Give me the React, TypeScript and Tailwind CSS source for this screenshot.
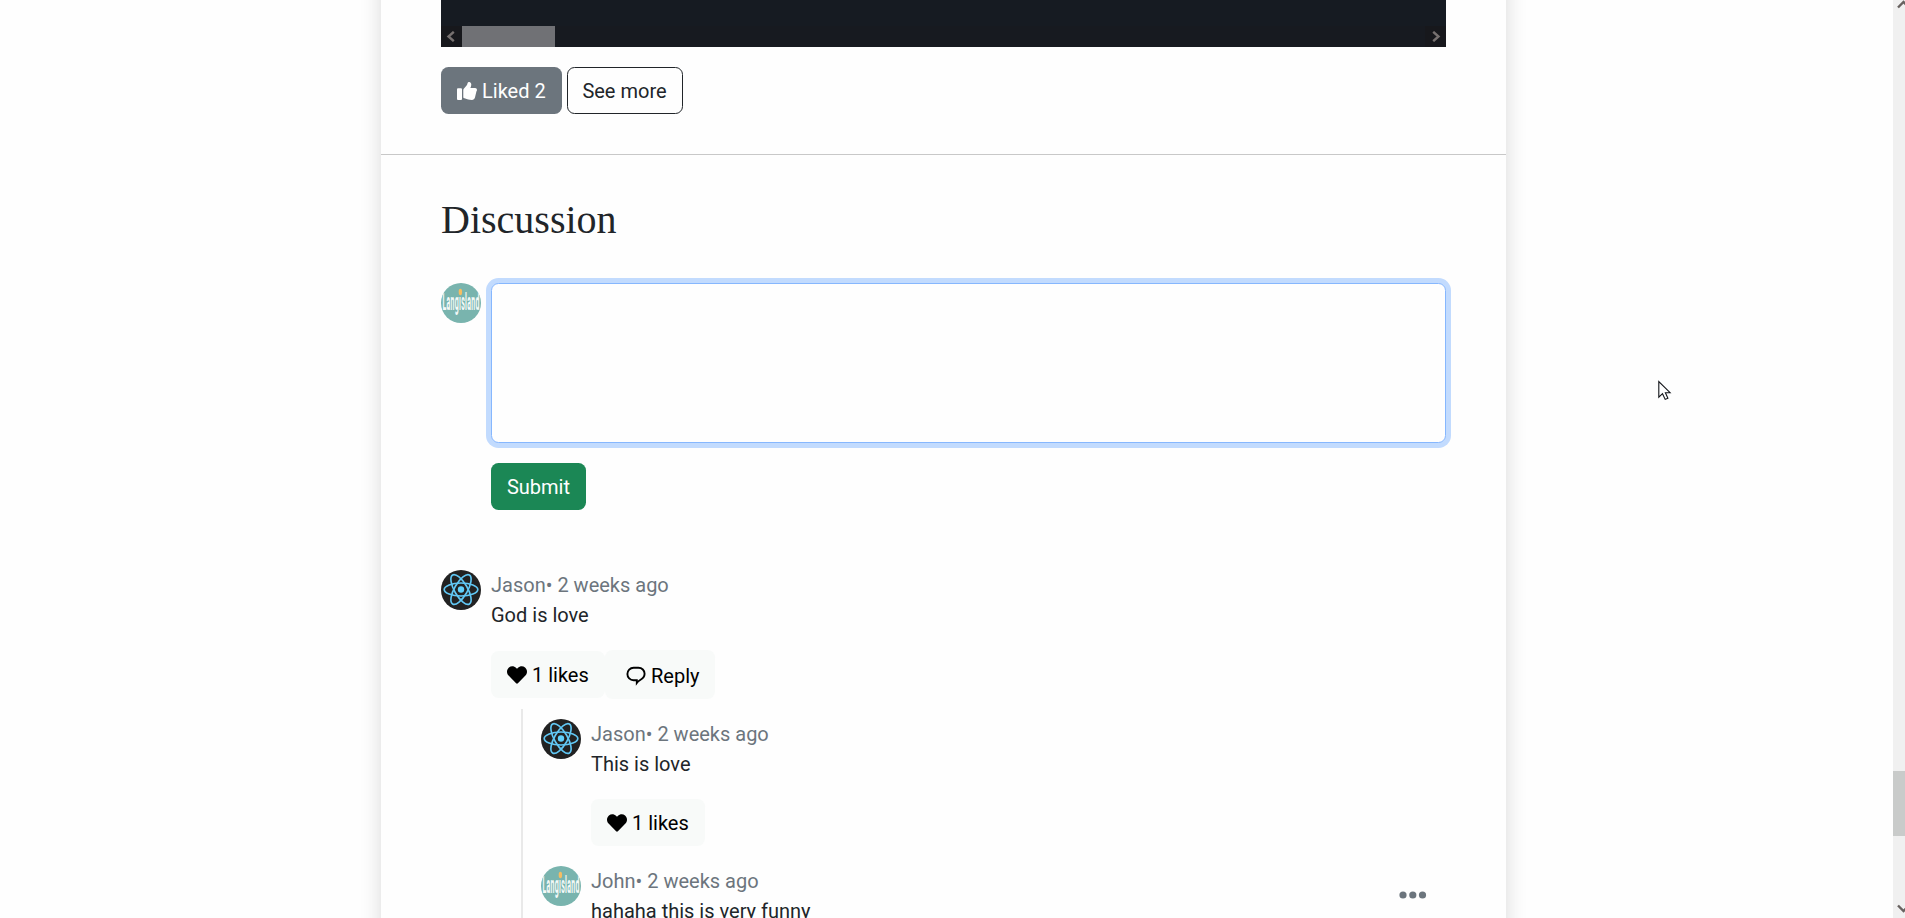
import type { ReactNode } from "react";
import { FaHeart } from "react-icons/fa";

function ThumbIcon() {
  return (
    <svg width="20" height="18" viewBox="0 0 20 18" fill="currentColor" className="shrink-0">
      <rect x="0" y="6.3" width="5" height="11.7" rx="1" />
      <path d="M6.300 8.200c0-.7.2-1.200.7-1.700l2.400-2.700c.8-.9.9-1.900 1.200-2.800C10.900.2 11.500 0 12.200.1c1.300.2 2.200 1.300 2.100 2.700-.1 1.300-.5 2.200-.9 3.200h4.700c1.100 0 1.900.9 1.900 1.900 0 .5-.3 1.100-.6 1.600l-1.300 5.600c-.4 1.900-1.300 2.800-3.300 2.800-2.800 0-4.600-.4-6.600-1.300-1.100-.5-1.900-.7-1.900-1.400Z" />
    </svg>
  );
}

function ReplyIcon() {
  return (
    <svg width="20" height="20" viewBox="0 0 20 20" fill="none" stroke="currentColor" strokeWidth="1.9" strokeLinejoin="miter" className="shrink-0">
      <path d="M7.600 1.700h4.800c3.600 0 6.200 2.700 6.200 6.100 0 2.900-2 4.900-4.400 6.200-1 .6-2 1.300-2.800 2.200l-.6.8v-2.700H7.600c-3.600 0-6.200-2.800-6.200-6.300 0-3.500 2.600-6.300 6.200-6.300Z" />
    </svg>
  );
}

function LangAvatar() {
  return (
    <svg width="40" height="40" viewBox="0 0 40 40" className="shrink-0 rounded-full bg-[#79b4ae]">
      <text transform="translate(1.500 27.300) scale(.285 1)" letterSpacing="1" fill="#f4f9f8" fontFamily="Roboto, sans-serif" fontWeight="700" fontSize="24.500">Langısland</text>
      <ellipse cx="19.400" cy="9" rx="1.700" ry="3.200" fill="#f5bd62" />
    </svg>
  );
}

function ReactAvatar() {
  return (
    <svg width="40" height="40" viewBox="0 0 40 40" className="shrink-0 rounded-full bg-[#222222]">
      <g transform="translate(20 19.500)" fill="none" stroke="#61c8f5" strokeWidth="1.650">
        <ellipse rx="16.800" ry="6.500" />
        <ellipse rx="16.800" ry="6.500" transform="rotate(60)" />
        <ellipse rx="16.800" ry="6.500" transform="rotate(120)" />
        <circle r="3.200" fill="#61d0fb" stroke="none" />
      </g>
    </svg>
  );
}

function Comment({ avatar, name, text, children }: { avatar: ReactNode; name: string; text: string; children?: ReactNode }) {
  return (
    <div className="flex gap-2.5">
      {avatar}
      <div className="grow">
        <p className="text-[#6c757d]">{name}• 2 weeks ago</p>
        <p>{text}</p>
        {children}
      </div>
    </div>
  );
}

function LikesButton() {
  return (
    <button className="flex h-[47px] w-[114px] items-center gap-[5px] rounded-[7.5px] bg-[#f8faf9] pl-4 text-black">
      <FaHeart size={20} className="shrink-0" />
      <span className="whitespace-nowrap">1 likes</span>
    </button>
  );
}

export default function App() {
  return (
    <div className="relative flex h-[918px] overflow-hidden bg-[#fefefe] font-['Roboto',sans-serif] text-[20px] leading-[30px] text-[#212529]">
      <div className="flex grow justify-center pr-[6px]">
        <main className="-mt-10 h-[1100px] w-[1125px] shrink-0 bg-[#fefefe] pt-10 shadow-[0_0_20px_rgba(0,0,0,0.15)]">
          <section className="h-[155px] border-b border-[#c8c8c8] px-[60px]">
            <div className="flex h-[47px] flex-col justify-end bg-[#161b22]">
              <div className="flex h-[21px] items-stretch justify-between bg-[#171a20]">
                <div className="flex">
                  <div className="flex w-[21px] items-center justify-center bg-[#17181c] pr-0.5">
                    <svg width="9" height="11" viewBox="0 0 9 11" fill="none" stroke="#777170" strokeWidth="2.400"><path d="M7.800.8 2.500 5.500l5.300 4.700" /></svg>
                  </div>
                  <div className="w-[93px] bg-[#707175]" />
                </div>
                <div className="flex w-[21px] items-center justify-center bg-[#17181c] pl-0.5">
                  <svg width="9" height="11" viewBox="0 0 9 11" fill="none" stroke="#777170" strokeWidth="2.400"><path d="m1.200.8 5.300 4.700-5.300 4.700" /></svg>
                </div>
              </div>
            </div>
            <div className="mt-5 flex gap-[5px]">
              <button className="flex h-[47px] w-[121px] items-center gap-[5px] rounded-[7.5px] bg-[#6c757d] pl-4 text-white">
                <ThumbIcon />
                <span className="whitespace-nowrap">Liked 2</span>
              </button>
              <button className="h-[47px] w-[116px] rounded-[7.5px] border border-[#212529] pr-px whitespace-nowrap">See more</button>
            </div>
          </section>

          <section className="px-[60px] pt-[41px]">
            <h2 className="font-['Liberation_Serif',serif] text-[40px] leading-[48px]">Discussion</h2>
            <div className="mt-[39px] flex gap-2.5">
              <LangAvatar />
              <div className="grow">
                <textarea className="block h-[160px] w-full resize-none rounded-[7.5px] border border-[#86b7fe] bg-[#fefefe] p-4 shadow-[0_0_0_5px_#c2dbfe] outline-none" />
                <button className="mt-5 h-[47px] w-[95px] rounded-[7.5px] bg-[#1b8755] text-white">Submit</button>
              </div>
            </div>

            <div className="mt-[60px]">
              <Comment avatar={<ReactAvatar />} name="Jason" text="God is love">
                <div className="mt-5 flex items-center">
                  <LikesButton />
                  <button className="flex h-[49px] w-[110px] items-center gap-[5px] rounded-[7.5px] bg-[#f8faf9] pt-0.5 pl-[21px] text-black">
                    <ReplyIcon />
                    <span className="whitespace-nowrap">Reply</span>
                  </button>
                </div>
              </Comment>
              <div className="mt-2.5 ml-20 h-[380px] border-l-2 border-[#e9e9e9] pt-2.5 pl-[18px]">
                <Comment avatar={<ReactAvatar />} name="Jason" text="This is love">
                  <div className="mt-5"><LikesButton /></div>
                </Comment>
                <div className="mt-5 flex items-start">
                  <div className="grow">
                    <Comment avatar={<LangAvatar />} name="John" text="hahaha this is very funny" />
                  </div>
                  <svg width="28" height="8" viewBox="0 0 28 8" fill="#6c757d" className="mt-[25px] mr-[19px] shrink-0">
                    <circle cx="4" cy="4" r="3.600" />
                    <circle cx="13.800" cy="4" r="3.600" />
                    <circle cx="23.500" cy="4" r="3.600" />
                  </svg>
                </div>
              </div>
            </div>
          </section>
        </main>
      </div>

      <aside className="flex w-3 shrink-0 flex-col justify-between overflow-hidden bg-[#f0f0f0]">
        <svg width="12" height="12" viewBox="0 0 12 12" fill="none" stroke="#686260" strokeWidth="2.400"><path d="m5 7.500 5.500-5.500 5.500 5.500" /></svg>
        <div className="mt-auto mb-[66px] h-[65px] bg-[#c9cbca]" />
        <svg width="12" height="16" viewBox="0 0 12 16" fill="none" stroke="#686260" strokeWidth="2.400" className="shrink-0"><path d="m5 3.500 5.500 5.500 5.500-5.500" /></svg>
      </aside>

      <svg width="14" height="21" viewBox="0 0 14 21" className="absolute top-[380px] left-[1658px]">
        <path d="M.8 1.500v15.700l3.700-3.500 2.700 5.700 2.700-1.200-2.500-5.500h4.700Z" fill="#fff" stroke="#111318" strokeWidth="1.100" />
      </svg>
    </div>
  );
}
